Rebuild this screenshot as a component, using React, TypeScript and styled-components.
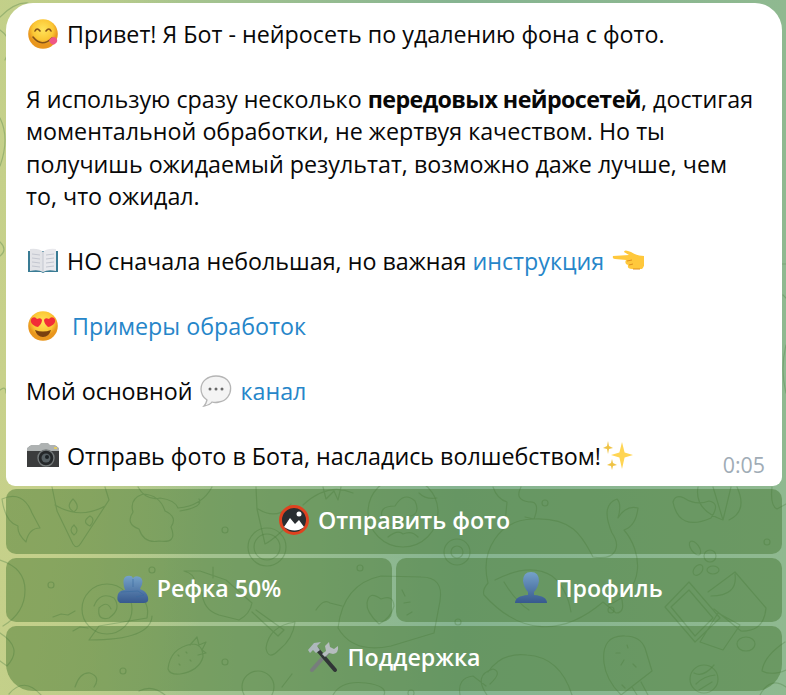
import React from "react";
import styled, { createGlobalStyle, css } from "styled-components";

const GlobalStyle = createGlobalStyle`
  * { box-sizing: border-box; }
  body { margin: 0; overflow: hidden; font-family: "Open Sans", "Noto Sans", sans-serif; }
`;

const Chat = styled.main`
  position: relative;
  width: 786px;
  height: 695px;
  padding: 3px 4px 0 6px;
  overflow: hidden;
  background:
    radial-gradient(ellipse 210px 800px at 0% 55%, #c8d18b 0%, rgba(200, 209, 139, 0) 100%),
    linear-gradient(90deg, #bdce87 0%, #a0c190 30%, #86b491 58%, #8fb990 100%);
`;

const Wallpaper = styled.svg`
  position: absolute;
  inset: 0;
  fill: none;
  stroke: #538449;
  stroke-opacity: 0.38;
  stroke-width: 1.2;
  stroke-linecap: round;
  stroke-linejoin: round;
`;

const Bubble = styled.article`
  position: relative;
  height: 483px;
  padding: 15px 20px 0;
  border-radius: 27px 27px 9px 9px;
  background: #fff;
  color: #080808;
  font-size: 23.27px;
  line-height: 32.45px;
`;

const Line = styled.p<{ $gap?: boolean }>`
  display: flex;
  align-items: center;
  height: 32.45px;
  margin: 0 0 ${(p) => (p.$gap ? "32.45px" : "0")};
  white-space: pre;
`;

const Bold = styled.b`
  font-weight: 700;
  letter-spacing: -0.6px;
`;

const Link = styled.a`
  color: #2686c9;
`;

const Time = styled.time`
  position: absolute;
  right: 17px;
  bottom: 5px;
  color: #a0acb6;
  font-size: 21.4px;
`;

const Keyboard = styled.section`
  position: relative;
  display: grid;
  grid-template-columns: 386px 386px;
  grid-auto-rows: 64.5px;
  gap: 4px;
  margin-top: 3px;
`;

const Key = styled.button<{ $wide?: boolean; $last?: boolean }>`
  display: flex;
  align-items: center;
  justify-content: center;
  gap: 8px;
  padding: 0 0 3px;
  border: 0;
  border-radius: ${(p) => (p.$last ? "10px 10px 27px 27px" : "10px")};
  background: rgba(66, 116, 45, 0.46);
  color: #fff;
  font: 600 23.2px "Open Sans", "Noto Sans", sans-serif;
  ${(p) => p.$wide && css`grid-column: 1 / -1;`}
`;

const Glyph = styled.svg<{ $right?: number; $left?: number }>`
  flex: none;
  width: 32px;
  height: 32px;
  margin-left: ${(p) => p.$left ?? 0}px;
  margin-right: ${(p) => p.$right ?? 0}px;
`;

type GlyphProps = { left?: number; right?: number };

function Face({ hearts, left, right }: GlyphProps & { hearts?: boolean }) {
  return (
    <Glyph viewBox="0 0 32 32" $left={left} $right={right}>
      <defs>
        <radialGradient id="faceFill" cx=".5" cy=".35">
          <stop stopColor="#ffe45b" />
          <stop offset=".7" stopColor="#fbc735" />
          <stop offset="1" stopColor="#e9961d" />
        </radialGradient>
      </defs>
      <circle cx="16" cy="16" r="14.8" fill="url(#faceFill)" />
      {hearts ? (
        <>
          <path d="M11 17C5 16 2 11 5 8q3-2 5 1 4-2 5 1c0 3-2 5-4 7ZM21 17c6-1 9-6 6-9q-3-2-5 1-4-2-5 1c0 3 2 5 4 7Z" fill="#f22d37" />
          <path d="M8 20q8 3 16 0-2 7-8 7t-8-7Z" fill="#79400f" />
        </>
      ) : (
        <>
          <path d="M8 13q2-4 5 0M19 13q3-4 5 0M6 19q9 11 19 1" fill="none" stroke="#835118" strokeWidth="1.6" strokeLinecap="round" />
          <path d="M22 22q4-5 7-2 3 3-1 6-4 2-6-4Z" fill="#ef5786" />
        </>
      )}
    </Glyph>
  );
}

function Book() {
  return (
    <Glyph viewBox="0 0 32 32" $left={1} $right={8}>
      <path d="M1 6h30v21H18l-2 1-2-1H1Z" fill="#397b94" />
      <path d="M3 4q9-1 13 3v20q-5-3-13-1Z" fill="#e2e3e7" />
      <path d="M29 4q-9-1-13 3v20q5-3 13-1Z" fill="#e9e9ed" />
      <path d="M16 7v20M5 9l8 1M5 13l8 1M5 17l8 1M5 21l8 1M19 10l8-1M19 14l8-1M19 18l8-1M19 22l8-1" fill="none" stroke="#c4c7d0" />
    </Glyph>
  );
}

function Pointer() {
  return (
    <Glyph viewBox="0 0 32 32" $left={8}>
      <path d="M1 11q-1 3 2 3l11 1q-2 4 2 5-1 4 4 4h10q4-4 2-13-7 0-13-4-7-3-7 0l5 3Z" fill="#ffc83c" />
      <path d="m15 16 5-1M17 20l4-1M21 24h7" stroke="#de8e1f" strokeWidth="1" />
    </Glyph>
  );
}

function Speech() {
  return (
    <Glyph viewBox="0 0 32 32" $left={8} $right={8}>
      <path d="M16 1C8 1 1 6 1 14q0 7 6 11-1 4-3 6 6-1 8-4 3 1 7 0c15-2 17-26-3-26Z" fill="#f4f4f4" stroke="#b5b5b5" strokeWidth="1.3" />
      <g fill="#686868"><circle cx="10" cy="14" r="1.5" /><circle cx="16" cy="14" r="1.5" /><circle cx="22" cy="14" r="1.5" /></g>
    </Glyph>
  );
}

function Camera({ right = 0 }: { right?: number }) {
  return (
    <Glyph viewBox="0 0 32 32" $left={1} $right={right}>
      <path d="M0 9 3 6h26l3 3v18H0Z" fill="#3b3c3d" />
      <path d="M0 11V8l4-3h8l2-2h7l2 2h5l4 3v3Z" fill="#aeb2b2" />
      <circle cx="19" cy="18" r="8" fill="#242729" stroke="#74797a" strokeWidth="1.4" />
      <circle cx="19" cy="18" r="4.5" fill="#565f63" />
      <circle cx="20" cy="17" r="2" fill="#1c2225" />
      <path d="M27 8h3" stroke="#e0ca67" strokeWidth="2" />
    </Glyph>
  );
}

function Sparkles() {
  return (
    <Glyph viewBox="0 0 32 32" $left={1}>
      <path d="m20 2 2.6 10.5L31 15l-8.4 2.5L20 29l-2.6-11.5L9 15l8.4-2.5Z" fill="#ffd553" />
      <path d="m6 1 1 5 4 2-4 1-1 5-1-5-4-1 4-2ZM10 19l1 4 4 2-4 1-1 4-1-4-4-1 4-2Z" fill="#efc344" />
    </Glyph>
  );
}

function People({ pair }: { pair?: boolean }) {
  return (
    <Glyph viewBox="0 0 32 32">
      <defs>
        <linearGradient id="peopleFill" x2="0" y2="1">
          <stop stopColor="#75a2ca" /><stop offset="1" stopColor="#37598e" />
        </linearGradient>
      </defs>
      {pair ? (
        <>
          <path d="M8 18Q4 6 10 4q5-1 6 2 2-3 7-1 5 3 0 12l4 2q5 4 4 10-1 2-4 2H3q-4-2-2-9 2-4 7-4Z" fill="url(#peopleFill)" />
          <path d="M16 7v8M4 20l17-1 6 4-8 2" fill="none" stroke="#3b6b9f" strokeOpacity=".65" />
        </>
      ) : (
        <path d="M16 0q-8 0-8 9 1 7 5 11v3Q0 24 0 31h32q0-7-13-8v-3q4-4 5-11Q24 0 16 0Z" fill="url(#peopleFill)" />
      )}
    </Glyph>
  );
}

function Tools() {
  return (
    <Glyph viewBox="0 0 32 32">
      <path d="m5 29 18-20" stroke="#777d7d" strokeWidth="4" strokeLinecap="round" />
      <path d="m10 8 18 21" stroke="#303536" strokeWidth="4" strokeLinecap="round" />
      <path d="M1 9 7 2l7-1-4 4 3 4-4 3-3-3-3 3Z" fill="#aeb8bd" />
      <path d="m19 10-1-5 4-4 1 5 4 2 4-3q1 7-5 8l-4-1-4 4-3-3Z" fill="#b6bdbf" />
    </Glyph>
  );
}

const dots = [
  [51, 585], [152, 570], [225, 530], [545, 503], [767, 542], [458, 622],
  [611, 610], [225, 662], [123, 671], [411, 693], [360, 568],
];

const Doodles = () => (
  <Wallpaper width="786" height="695" viewBox="0 0 786 695">
    <path d="M0 17q15-15 28-14M0 30q15 10 5 30M0 118q10 20 0 48M0 242q8 8 0 14M0 390q6-5 6 3M782 264h4M783 295q3 3 3 3M786 345q-6 24 0 48" />
    <path d="M52 487l5 24 16 33q4 6 8-1l28-43-4-13M55 505q25 15 50 1M73 499q-8 8 1 13 7-5-1-13M90 516q-9 6 0 10 6-7 0-10M74 525q-6 5 0 10 6-4 0-10" />
    <path d="M2 499q21-9 30 14l8 15q-11 0-14 14-9-8-8-16Q5 522 2 499M0 560q25 8 25 30 0 23-22 36M0 633q24 15 7 33l-7-5" />
    <path d="M143 494q-14 5-10 18-8 12 6 17 5 15 20 12 19 3 12-14 7-10-6-16-5-16-22-17M138 487q8 14 22 11 15 2 18 10 24-2 34-21M180 511q24-4 19-12" />
    <path d="M256 487l1 22 8 35q9-4 37-32M258 509q20 12 33-5M303 505q25-23 50-12M323 487l3 12 8-8 4 9 3-13" />
    <circle cx="267" cy="547" r="19" /><circle cx="267" cy="547" r="13" />
    <circle cx="403" cy="512" r="35" />
    <path d="M383 520q-6-14 12-14 9-15 20-5 7 15-10 16-4 17-22 3M388 537q10-8 15-3 9-4 15 3M419 493q7 7 18 5" />
    <path d="M493 487q4 12 14 15l-2 21M521 487q-7 13 8 15 12-1 5 17l-9-2M488 583c-8-32 11-64 46-64 42-2 50 22 59 38 24 4 28-11 19-24q-12-28 5-34 5 5 1 19 8-13 20-10-2 18-14 22c18 21 23 60-16 75M488 583q-6 7-4 12c36 40 78 42 119 7l13 11q10 0 5-17l-11-11M495 580q35-18 57-4 15 12 19 36M504 582q12 20 25 28" />
    <path d="M673 502q2-8 11-4 12 8 25 3 12 2 2 17-32 14-38-16M698 487q-4 23 25 33M713 487l10 33 8-33M737 487q11 24-8 33M772 487q-2 19 5 22l9-5" />
    <circle cx="457" cy="552" r="13" /><circle cx="457" cy="552" r="6" />
    <ellipse cx="695" cy="548" rx="4" ry="8" transform="rotate(-35 695 548)" /><circle cx="710" cy="556" r="6" /><ellipse cx="698" cy="570" rx="4" ry="6" transform="rotate(40 698 570)" />
    <path d="M89 640l10-14 48-8q3-16-9-22M89 640q62 0 63-24M53 617l8-3 7 1 7-4M73 631l7-4 8 1" />
    <circle cx="107" cy="609" r="25" /><path d="M94 606q6-15 20-8 8 11-5 20-12 3-10-10 8-8 12 1" />
    <path d="M184 571q12 3 11 14-4 8 7 7 1 18 17 23l20 5q11-6 13-17l-26-23-26-9-16 0M213 567v11M252 612l26 24 6-6-28-20M295 622q-26 4-29 26 2 13 13 2 14-11 16-28" />
    <path d="M338 628q5-44 43-52l40 1q23 0 19 24l-6 32-43 13q-38 8-53-18M316 610q8-12 14-7l12 3M367 603q2-13 14-4 12-5 13 7-3 12-15 18-13-12-12-21M402 590l3 6M410 602l-6 1M407 615l5-3" />
    <path d="m665 607 24-25 31 36-25 24ZM671 607l18-17 24 28-18 18ZM700 642l18-29 22 12-17 25ZM708 592l27-20 31 36q-2 24-25 23l-27-22M735 574q3 22-24 22" />
    <ellipse cx="746" cy="644" rx="9" ry="7" /><ellipse cx="713" cy="570" rx="6" ry="4" />
    <path d="M168 669q2-21 24-25 11 0 11 13-4 14-23 17-10 1-12-5M190 645l7-8 2 8 7-3-4 8 4 3-8 2M178 655l1 1M186 652l1 1M179 664l1 1M190 660l1 1" />
    <path d="M604 663q-3-28 21-27 15 0 20 12l7 23-31 24q-15-15-17-32M616 653h4M627 645l1 3M621 665l3-5M636 667l-3-3M625 688l-3-3M641 682l7 13M632 687l5 8" />
    <circle cx="704" cy="679" r="14" /><path d="M694 673q9 5 20-8M696 684q8-8 19-9M699 690l13-8M785 642q-21 14-23 29 10 5 24-1M760 695q10-19 26-8" />
    <path d="M460 695q-3-17 13-19l13 10M488 672q14-20 39-17 33 2 45 40M490 684q13-12 3-15-20 6-6 26M75 687q5-15 15-14 11 4 4 14M9 694q15-18 32 1M139 691q13-7 26 4" />
    <circle cx="258" cy="687" r="16" /><path d="M282 687l10-13M333 695q8-15 33-12 22 3 18 12" />
    {dots.map(([cx, cy]) => <circle key={`${cx}-${cy}`} cx={cx} cy={cy} r="3" />)}
  </Wallpaper>
);

const Picture = () => (
  <Glyph viewBox="0 0 32 32">
    <circle cx="16" cy="16" r="13.5" fill="#292d30" stroke="#df421f" strokeWidth="3" />
    <path d="m6 23 6-9 5 6 4-4 5 7q-9 7-20 0Z" fill="#fff" />
    <circle cx="21" cy="10" r="2.5" fill="#fff" />
  </Glyph>
);

export default function App() {
  return (
    <>
      <GlobalStyle />
      <Chat>
        <Doodles />
        <Bubble>
          <Line $gap><Face left={1} right={8} />Привет! Я Бот - нейросеть по удалению фона с фото.</Line>
          <Line>Я использую сразу несколько <Bold>передовых нейросетей</Bold>, достигая</Line>
          <Line>моментальной обработки, не жертвуя качеством. Но ты</Line>
          <Line>получишь ожидаемый результат, возможно даже лучше, чем</Line>
          <Line $gap>то, что ожидал.</Line>
          <Line $gap><Book />НО сначала небольшая, но важная <Link>инструкция</Link><Pointer /></Line>
          <Line $gap><Face hearts left={1} right={13} /><Link>Примеры обработок</Link></Line>
          <Line $gap>Мой основной<Speech /><Link>канал</Link></Line>
          <Line><Camera right={8} />Отправь фото в Бота, насладись волшебством!<Sparkles /></Line>
          <Time>0:05</Time>
        </Bubble>
        <Keyboard>
          <Key $wide><Picture />Отправить фото</Key>
          <Key><People pair />Рефка 50%</Key>
          <Key><People />Профиль</Key>
          <Key $wide $last><Tools />Поддержка</Key>
        </Keyboard>
      </Chat>
    </>
  );
}
